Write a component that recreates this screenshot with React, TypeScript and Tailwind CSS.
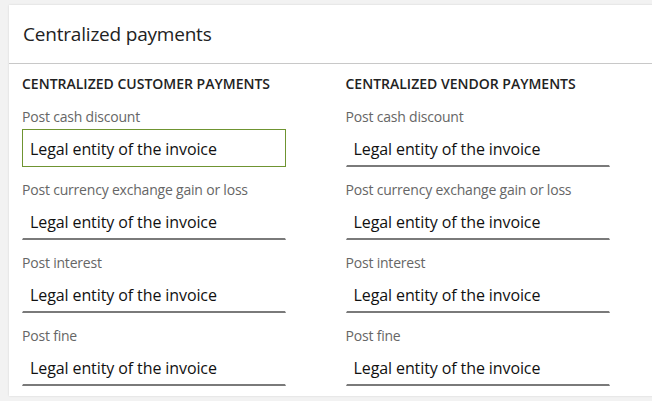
import React from "react";

const font = { fontFamily: '"Open Sans", "Noto Sans", sans-serif' };

function Field({ label, focused }: { label: string; focused?: boolean }) {
  return (
    <div className="flex flex-col">
      <div className="h-[18px] leading-[18px] text-[14px] text-[#666666] tracking-[-0.2px]">{label}</div>
      <div
        className={
          "mt-[3px] mb-[14px] h-[38px] w-[264px] flex items-center pl-[7px] pt-[2px] text-[16px] text-[#111111] tracking-[-0.1px] " +
          (focused
            ? "border-[1.5px] border-[#6f9431]"
            : "border border-transparent border-b-2 border-b-[#7a7a7a]")
        }
      >
        Legal entity of the invoice
      </div>
    </div>
  );
}

function Column({ title, focusFirst }: { title: string; focusFirst?: boolean }) {
  return (
    <div className="flex flex-col w-[324px]">
      <div className="h-[20px] leading-[20px] text-[14px] font-semibold text-[#222222] tracking-[0px] mb-[14px]">
        {title}
      </div>
      <Field label="Post cash discount" focused={focusFirst} />
      <Field label="Post currency exchange gain or loss" />
      <Field label="Post interest" />
      <Field label="Post fine" />
    </div>
  );
}

export default function App() {
  return (
    <div className="w-[652px] h-[401px] bg-[#f2f2f2] overflow-hidden pt-[5px] pl-[9px]" style={font}>
      <div className="w-[660px] h-[391px] bg-white shadow-[0_0_2px_rgba(0,0,0,0.12)] flex flex-col">
        <div className="h-[59px] flex items-center px-[14px] border-b border-[#c8c8c8] shrink-0">
          <span className="text-[19px] text-[#222222] tracking-[-0.2px]">Centralized payments</span>
        </div>
        <div className="flex pl-[13px] pt-[10px]">
          <Column title="CENTRALIZED CUSTOMER PAYMENTS" focusFirst />
          <Column title="CENTRALIZED VENDOR PAYMENTS" />
        </div>
      </div>
    </div>
  );
}
